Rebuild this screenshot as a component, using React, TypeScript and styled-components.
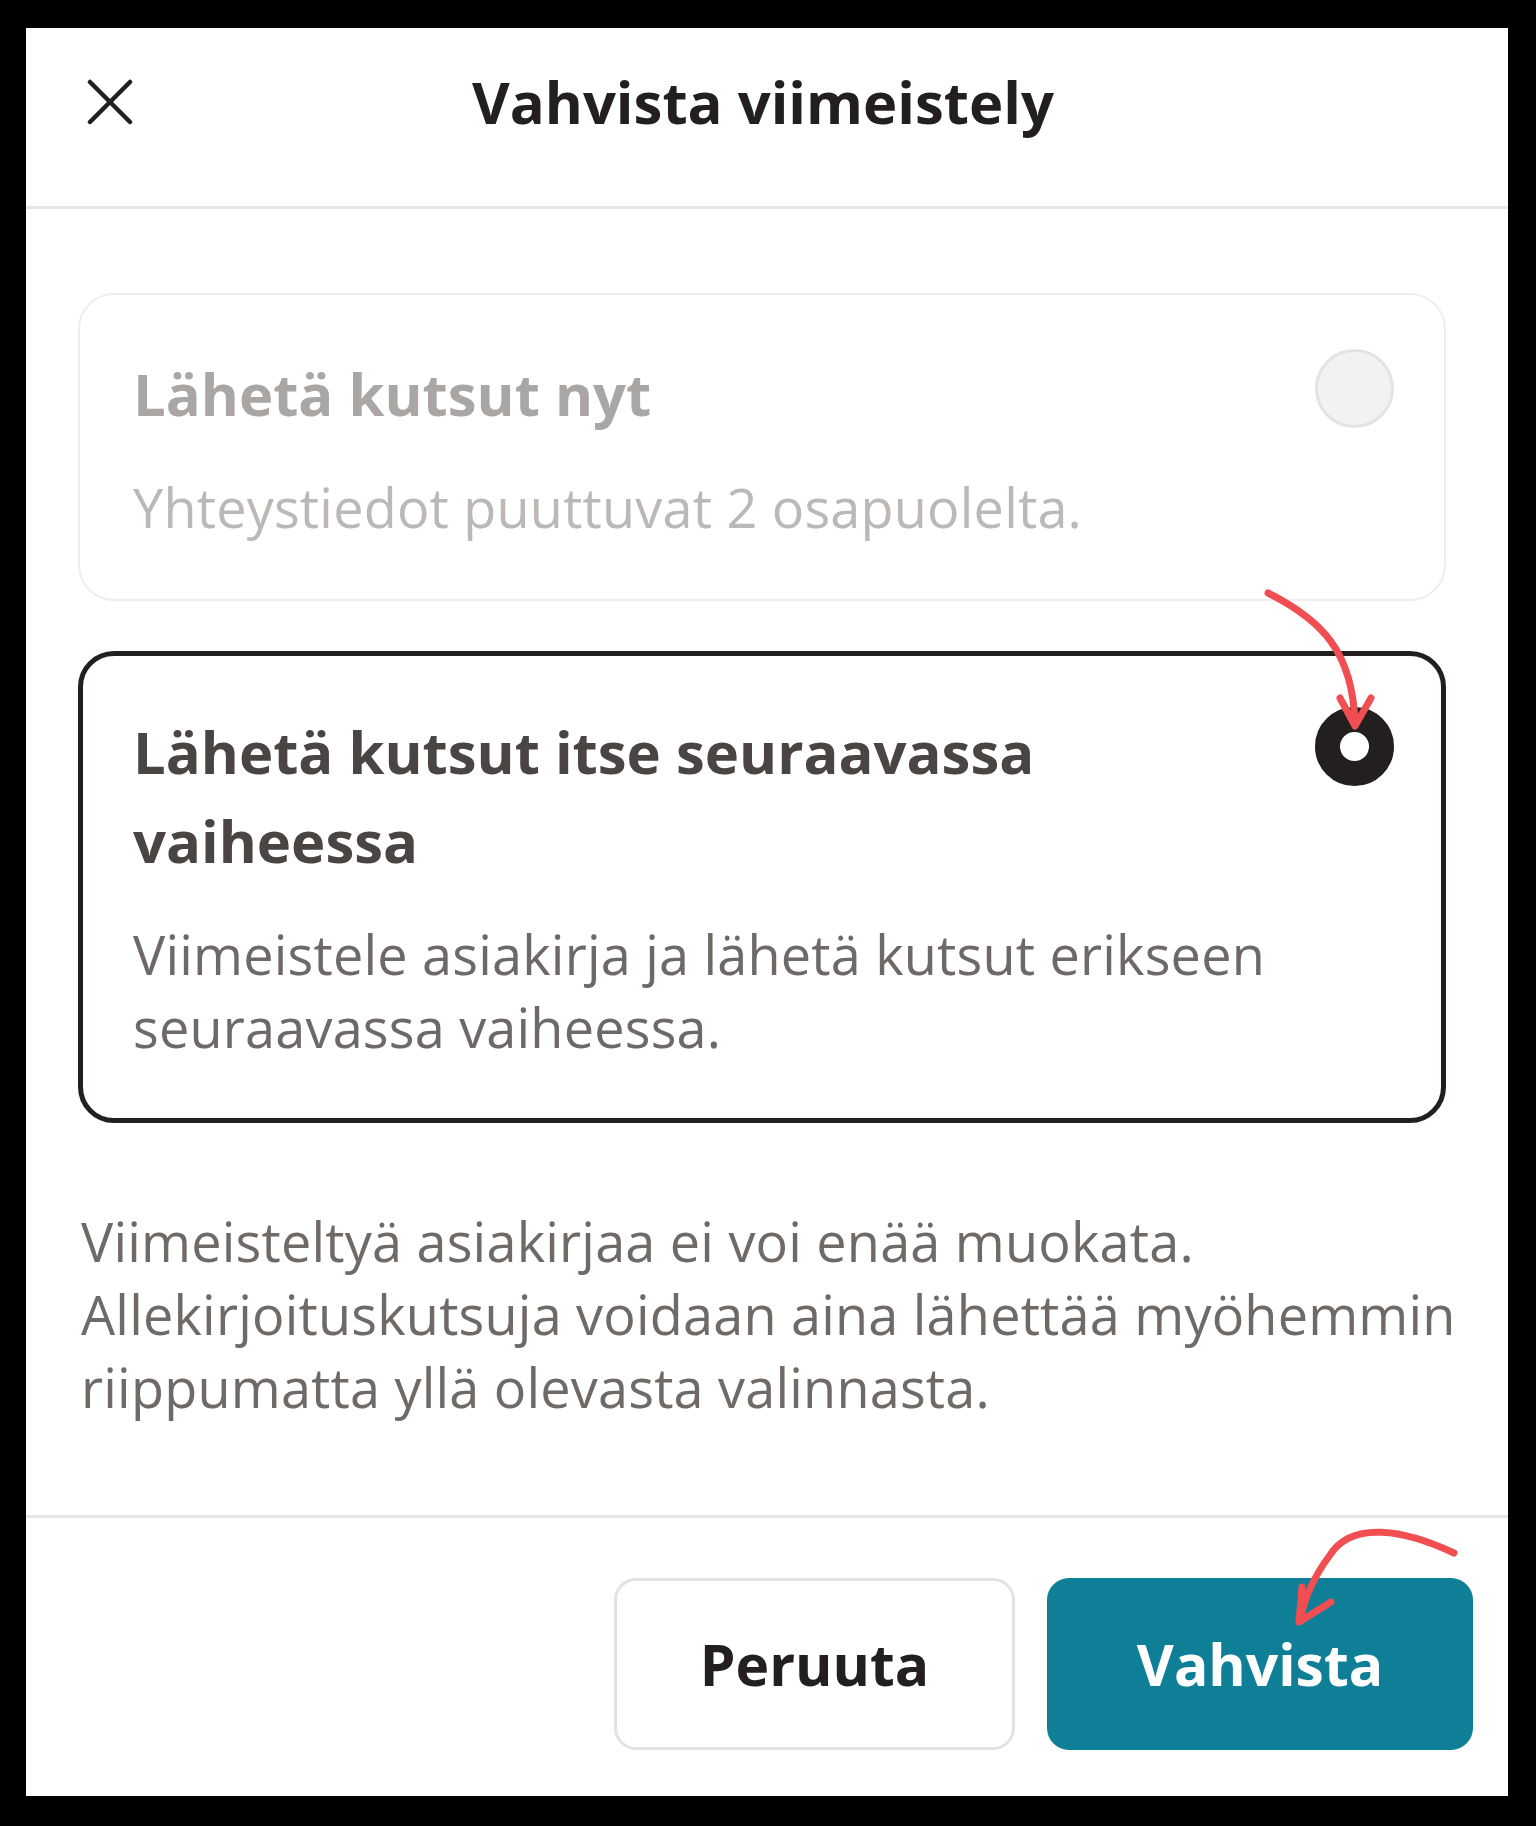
import styled, { createGlobalStyle } from "styled-components";

const Global = createGlobalStyle`
  html, body {
    margin: 0;
    background: #000;
  }
  body {
    font-family: "Open Sans", "Liberation Sans", sans-serif;
    -webkit-font-smoothing: antialiased;
  }
`;

const Page = styled.div`
  position: relative;
  width: 1536px;
  height: 1826px;
  box-sizing: border-box;
  padding: 28px 0 0 26px;
`;

const Panel = styled.div`
  width: 1482px;
  height: 1768px;
  background: #fff;
  display: flex;
  flex-direction: column;
`;

const Header = styled.div`
  height: 181px;
  box-sizing: border-box;
  padding: 0 69px 30px 61px;
  border-bottom: 3px solid #e7e6e5;
  display: grid;
  grid-template-columns: 1fr auto 1fr;
  align-items: center;
`;

const CloseButton = styled.button`
  justify-self: start;
  width: 46px;
  height: 46px;
  padding: 0;
  border: none;
  background: none;
  color: #231f20;
  display: flex;
`;

const Title = styled.h1`
  margin: 0;
  font-size: 58px;
  font-weight: 700;
  line-height: 1;
  color: #231f20;
`;

const Body = styled.div`
  padding: 84px 62px 0 52px;
  display: flex;
  flex-direction: column;
  gap: 50px;
`;

const Card = styled.div<{ $selected?: boolean }>`
  border-radius: 36px;
  border: ${(p) => (p.$selected ? "5px solid #231f20" : "2px solid #efeeed")};
  padding: ${(p) => (p.$selected ? "51px 47px 54px 50px" : "54px 50px 55px 53px")};
`;

const CardHead = styled.div`
  display: flex;
  justify-content: space-between;
  align-items: flex-start;
  gap: 40px;
`;

const CardTitle = styled.div<{ $disabled?: boolean }>`
  max-width: 1040px;
  font-size: 58px;
  font-weight: 700;
  line-height: 89px;
  color: ${(p) => (p.$disabled ? "#aaa6a4" : "#4a4543")};
`;

const CardText = styled.p<{ $disabled?: boolean }>`
  margin: 33px 0 0;
  font-size: 54px;
  letter-spacing: 0.2px;
  line-height: 73px;
  color: ${(p) => (p.$disabled ? "#bcb8b6" : "#6e6866")};
`;

const Radio = styled.span<{ $checked?: boolean }>`
  flex: none;
  width: 79px;
  height: 79px;
  box-sizing: border-box;
  border-radius: 50%;
  background: ${(p) => (p.$checked ? "#fff" : "#f3f2f2")};
  border: ${(p) => (p.$checked ? "25px solid #231f20" : "3px solid #e4e3e2")};
`;

const Note = styled.p`
  margin: 32px -40px 0 0;
  padding-left: 3px;
  font-size: 54px;
  letter-spacing: 0.2px;
  line-height: 73px;
  color: #706a67;
`;

const Footer = styled.div`
  margin-top: auto;
  border-top: 3px solid #e7e6e5;
  padding: 60px 35px 46px 0;
  display: flex;
  justify-content: flex-end;
  gap: 32px;
`;

const Button = styled.button<{ $primary?: boolean }>`
  height: 172px;
  width: ${(p) => (p.$primary ? "426px" : "401px")};
  box-sizing: border-box;
  border-radius: 22px;
  border: ${(p) => (p.$primary ? "none" : "3px solid #e3e2e1")};
  background: ${(p) => (p.$primary ? "#0e7f97" : "#fff")};
  color: ${(p) => (p.$primary ? "#fff" : "#231f20")};
  font-family: inherit;
  font-size: 57px;
  font-weight: 700;
`;

const Annotations = styled.svg`
  position: absolute;
  top: 0;
  left: 0;
  pointer-events: none;
`;

export default function App() {
  return (
    <Page>
      <Global />
      <Panel>
        <Header>
          <CloseButton aria-label="Sulje">
            <svg width="46" height="46" viewBox="0 0 46 46">
              <path
                d="M3 3 L43 43 M43 3 L3 43"
                stroke="currentColor"
                strokeWidth="4.5"
                strokeLinecap="round"
              />
            </svg>
          </CloseButton>
          <Title>Vahvista viimeistely</Title>
          <span />
        </Header>

        <Body>
          <Card>
            <CardHead>
              <CardTitle $disabled>Lähetä kutsut nyt</CardTitle>
              <Radio />
            </CardHead>
            <CardText $disabled>Yhteystiedot puuttuvat 2 osapuolelta.</CardText>
          </Card>

          <Card $selected>
            <CardHead>
              <CardTitle>Lähetä kutsut itse seuraavassa vaiheessa</CardTitle>
              <Radio $checked />
            </CardHead>
            <CardText>
              Viimeistele asiakirja ja lähetä kutsut erikseen seuraavassa
              vaiheessa.
            </CardText>
          </Card>

          <Note>
            Viimeisteltyä asiakirjaa ei voi enää muokata.
            <br />
            Allekirjoituskutsuja voidaan aina lähettää myöhemmin
            <br />
            riippumatta yllä olevasta valinnasta.
          </Note>
        </Body>

        <Footer>
          <Button>Peruuta</Button>
          <Button $primary>Vahvista</Button>
        </Footer>
      </Panel>

      <Annotations width="1536" height="1826" viewBox="0 0 1536 1826">
        <g
          fill="none"
          stroke="#f04e50"
          strokeWidth="7"
          strokeLinecap="round"
          strokeLinejoin="round"
        >
          <path d="M1268 593 C1322 620 1353 652 1355 724" />
          <path d="M1340 698 L1355 726 L1371 698" />
          <path d="M1454 1553 C1405 1530 1352 1520 1330 1555 C1315 1575 1305 1595 1300 1620" />
          <path d="M1302 1587 L1299 1622 L1331 1602" />
        </g>
      </Annotations>
    </Page>
  );
}
